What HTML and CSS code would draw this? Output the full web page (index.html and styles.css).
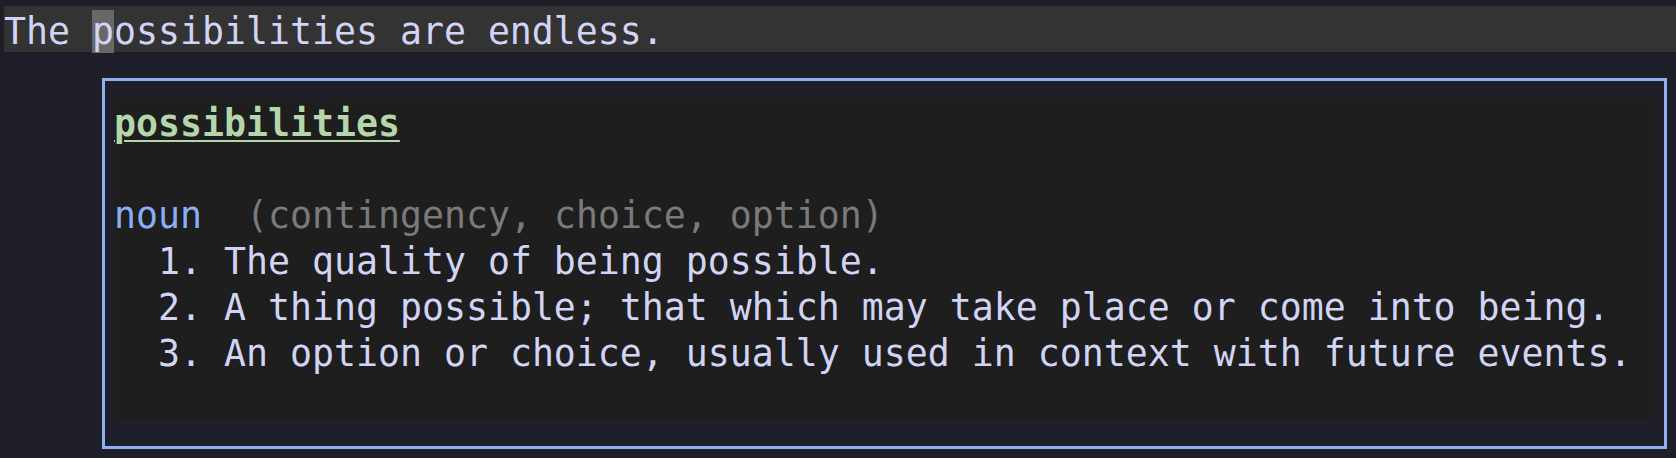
FILE: index.html
```html
<!DOCTYPE html>
<html lang="en">
<head>
<meta charset="utf-8">
<title>Dictionary popup</title>
<link rel="stylesheet" href="styles.css">
</head>
<body>
<div class="screen">
  <div class="bar"><span>The </span><span class="cursor">p</span><span>ossibilities are endless.</span></div>
  <div class="popup">
    <div class="content">
      <div class="line"><span class="word">possibilities</span></div>
      <div class="line"> </div>
      <div class="line"><span class="pos">noun</span>  <span class="syn">(contingency, choice, option)</span></div>
      <div class="line">  1. The quality of being possible.</div>
      <div class="line">  2. A thing possible; that which may take place or come into being.</div>
      <div class="line">  3. An option or choice, usually used in context with future events.</div>
    </div>
  </div>
</div>
</body>
</html>
```

FILE: styles.css
```css
html, body {
  margin: 0;
  padding: 0;
  background: #1f1f29;
  height: 100%;
  overflow: hidden;
}

.screen {
  padding: 6px 0 0 4px;
  font-family: "DejaVu Sans Mono", "Liberation Mono", monospace;
  font-size: 36.54px;
  line-height: 46px;
  color: #d2d4f5;
}

.bar {
  height: 46px;
  box-sizing: border-box;
  padding-top: 3px;
  background: #333333;
  white-space: pre;
}

.cursor {
  background: #686868;
}

.popup {
  margin: 26px 0 0 98px;
  width: 1565px;
  height: 371px;
  box-sizing: border-box;
  border: 3px solid #8fb0f2;
  padding: 17px 10px 26px 9px;
}

.content {
  background: #1e1e1e;
  height: 322px;
  box-sizing: border-box;
  padding-top: 3px;
}

.line {
  height: 46px;
  white-space: pre;
}

.word {
  color: #b4d6aa;
  font-weight: bold;
  text-decoration: underline;
  text-decoration-thickness: 2px;
  text-underline-offset: 4px;
}

.pos {
  color: #8aadf4;
}

.syn {
  color: #7a7a7a;
}
```
